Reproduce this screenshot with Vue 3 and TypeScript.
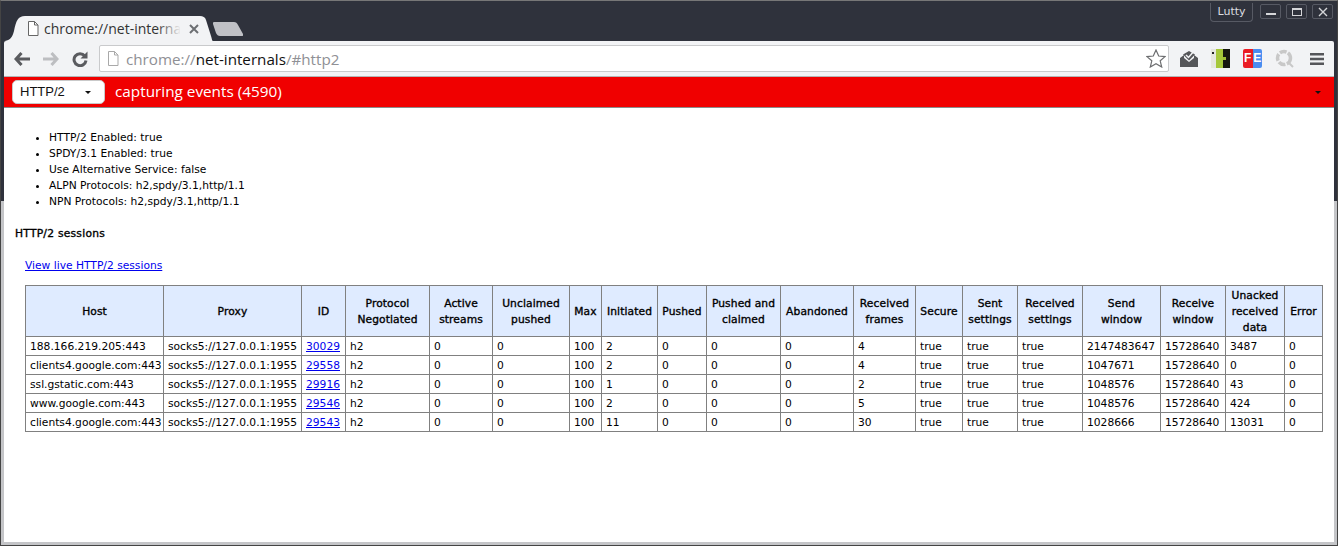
<script setup lang="ts">
interface Session {
  host: string
  id: string
  initiated: string
  frames: string
  sendWindow: string
  unacked: string
}

const headers: string[][] = [
  ['Host'], ['Proxy'], ['ID'], ['Protocol', 'Negotiated'], ['Active', 'streams'], ['Unclaimed', 'pushed'],
  ['Max'], ['Initiated'], ['Pushed'], ['Pushed and', 'claimed'], ['Abandoned'], ['Received', 'frames'],
  ['Secure'], ['Sent', 'settings'], ['Received', 'settings'], ['Send', 'window'], ['Receive', 'window'],
  ['Unacked', 'received', 'data'], ['Error'],
]
const colWidths = [138, 138, 44, 84, 63, 77, 32, 56, 49, 74, 73, 62, 47, 55, 65, 78, 65, 59, 38]

const sessions: Session[] = [
  { host: '188.166.219.205:443', id: '30029', initiated: '2', frames: '4', sendWindow: '2147483647', unacked: '3487' },
  { host: 'clients4.google.com:443', id: '29558', initiated: '2', frames: '4', sendWindow: '1047671', unacked: '0' },
  { host: 'ssl.gstatic.com:443', id: '29916', initiated: '1', frames: '2', sendWindow: '1048576', unacked: '43' },
  { host: 'www.google.com:443', id: '29546', initiated: '2', frames: '5', sendWindow: '1048576', unacked: '424' },
  { host: 'clients4.google.com:443', id: '29543', initiated: '11', frames: '30', sendWindow: '1028666', unacked: '13031' },
]
const info = [
  'HTTP/2 Enabled: true',
  'SPDY/3.1 Enabled: true',
  'Use Alternative Service: false',
  'ALPN Protocols: h2,spdy/3.1,http/1.1',
  'NPN Protocols: h2,spdy/3.1,http/1.1',
]
</script>

<template>
  <div class="window">
    <div class="titlebar">
      <div class="tabs">
        <div class="tab">
          <svg class="tab-shape" width="208" height="25" viewBox="0 0 208 25">
            <path d="M0 25c5-1 7-3 9-10C11 5 13 0 20 0h175c3 0 5 1 6 4l5 16c1 3 1 5 2 5z" fill="#f2f3f5" />
          </svg>
          <svg class="page-icon" width="12" height="15" viewBox="0 0 12 15">
            <path d="M1.500.5h6l3.500 3.500v10.500h-9.500z" fill="#fff" stroke="#666" />
            <path d="M7.500.5v3.500h3.500" fill="none" stroke="#666" />
          </svg>
          <span class="tab-title">chrome://net-interna</span>
          <span class="tab-fade"></span>
          <svg class="tab-close" width="10" height="10" viewBox="0 0 10 10">
            <path d="M1 1l8 8M9 1l-8 8" stroke="#6d6f73" stroke-width="2" />
          </svg>
        </div>
        <svg class="new-tab" width="30" height="14" viewBox="0 0 30 14">
          <path d="M1 0h20c2 0 3 1 4 3l5 9c.4 1 0 2-1 2H7c-2 0-3-1-4-3L0 2C-.3 1 0 0 1 0z" fill="#c0c1c6" />
        </svg>
      </div>
      <div class="profile">Lutty</div>
      <div class="win-buttons">
        <div class="win-btn"><svg width="12" height="12" viewBox="0 0 12 12"><rect x="1" y="7" width="10" height="2" fill="#d5d6d9" /></svg></div>
        <div class="win-btn"><svg width="12" height="12" viewBox="0 0 12 12"><rect x="1.500" y="2.500" width="9" height="7" fill="none" stroke="#d5d6d9" /><rect x="1" y="2" width="10" height="2" fill="#d5d6d9" /></svg></div>
        <div class="win-btn"><svg width="12" height="12" viewBox="0 0 12 12"><path d="M2 2l8 8M10 2l-8 8" stroke="#d5d6d9" stroke-width="1.400" /></svg></div>
      </div>
    </div>

    <div class="toolbar">
      <svg class="nav" width="16" height="14" viewBox="0 0 16 14"><path d="M7.500 1L2 7l5.500 6M3 7h13" fill="none" stroke="#5a5b5f" stroke-width="3" /></svg>
      <svg class="nav" width="16" height="14" viewBox="0 0 16 14"><path d="M8.500 1L14 7l-5.500 6M13 7H0" fill="none" stroke="#bdbec1" stroke-width="3" /></svg>
      <svg class="nav" width="16" height="16" viewBox="0 0 16 16"><path d="M12.800 5A6 6 0 1 0 14 9.500" fill="none" stroke="#5a5b5f" stroke-width="3" /><path d="M15.500 0.500v7H8.500z" fill="#5a5b5f" /></svg>
      <div class="omnibox">
        <svg class="page-icon" width="12" height="15" viewBox="0 0 12 15">
          <path d="M1.500.5h6l3.500 3.500v10.500h-9.500z" fill="#fff" stroke="#a9a9a9" />
          <path d="M7.500.5v3.500h3.500" fill="none" stroke="#a9a9a9" />
        </svg>
        <span class="url"><span class="dim">chrome://</span>net-internals<span class="dim">/#http2</span></span>
        <svg class="star" width="20" height="19" viewBox="0 0 20 19"><path d="M10 1l2.700 6 6.300.6-4.800 4.200 1.500 6.200L10 14.700 4.300 18l1.500-6.200L1 7.600 7.300 7z" fill="#fff" stroke="#6d6e70" stroke-width="1.200" /></svg>
      </div>
      <div class="extensions">
        <svg width="18" height="17" viewBox="0 0 18 17"><path d="M0 8l4-3v3l5 4 5-4V5l4 3v9H0z" fill="#555659" /><path d="M3 4.500L9 1l6 3.500-6 6z" fill="#555659" /><path d="M6 5l2.500 2.500L14 1" fill="none" stroke="#f2f3f5" stroke-width="1.500" /></svg>
        <svg width="19" height="19" viewBox="0 0 19 19"><rect width="5" height="19" fill="#e6e7df" /><rect x="5" width="8" height="19" fill="#a6c83a" /><rect x="12" width="7" height="19" fill="#16170f" /><rect x="1" y="3" width="2" height="2" fill="#222" /><rect x="12" y="8" width="3" height="3" fill="#9fbe36" /></svg>
        <div class="fe"><span>F</span><span>E</span></div>
        <svg width="19" height="19" viewBox="0 0 19 19"><circle cx="9" cy="9" r="6.500" fill="none" stroke="#c8c8c8" stroke-width="3.500" stroke-dasharray="7 1.500" /><path d="M13 13l5 5" stroke="#c8c8c8" stroke-width="2" /></svg>
      </div>
      <svg class="menu" width="14" height="12" viewBox="0 0 14 12"><path d="M0 1.250h14M0 6h14M0 10.750h14" stroke="#55565a" stroke-width="2.400" /></svg>
    </div>

    <div class="page">
      <div class="status-bar">
        <div class="view-select">HTTP/2<i class="caret"></i></div>
        <span class="capture">capturing events (4590)</span>
        <i class="caret bar-caret"></i>
      </div>
      <div class="content">
        <ul class="info">
          <li v-for="line in info" :key="line">{{ line }}</li>
        </ul>
        <h4>HTTP/2 sessions</h4>
        <a class="live" href="#">View live HTTP/2 sessions</a>
        <table class="sessions">
          <colgroup>
            <col v-for="(w, i) in colWidths" :key="i" :style="{ width: w + 'px' }" />
          </colgroup>
          <thead>
            <tr>
              <th v-for="h in headers" :key="h.join()">
                <div v-for="part in h" :key="part">{{ part }}</div>
              </th>
            </tr>
          </thead>
          <tbody>
            <tr v-for="s in sessions" :key="s.id">
              <td>{{ s.host }}</td>
              <td>socks5://127.0.0.1:1955</td>
              <td><a href="#">{{ s.id }}</a></td>
              <td>h2</td>
              <td>0</td>
              <td>0</td>
              <td>100</td>
              <td>{{ s.initiated }}</td>
              <td>0</td>
              <td>0</td>
              <td>0</td>
              <td>{{ s.frames }}</td>
              <td>true</td>
              <td>true</td>
              <td>true</td>
              <td>{{ s.sendWindow }}</td>
              <td>15728640</td>
              <td>{{ s.unacked }}</td>
              <td>0</td>
            </tr>
          </tbody>
        </table>
      </div>
    </div>
  </div>
</template>

<style>
html, body {
  margin: 0;
  background: #fff;
  overflow: hidden;
}
</style>

<style scoped>
.window {
  width: 1338px;
  height: 546px;
  box-sizing: border-box;
  padding: 2px 4px 3px 4px;
  background: linear-gradient(#2f323c 200px, #c4c5c8 200px);
  border-top: 1px solid #777;
  border-left: 1px solid #444;
  border-right: 1px solid #444;
  border-bottom: 1px solid #444;
  display: flex;
  flex-direction: column;
  font-family: "DejaVu Sans", sans-serif;
  position: relative;
}

.titlebar {
  height: 38px;
  display: flex;
  align-items: flex-start;
  flex: none;
  margin-left: -1px;
  margin-right: -1px;
}
.tabs {
  display: flex;
  align-items: flex-end;
  height: 38px;
  margin-left: 1px;
}
.tab {
  position: relative;
  width: 208px;
  height: 25px;
  display: flex;
  align-items: center;
  padding-left: 22px;
  box-sizing: border-box;
  color: #333;
  font-size: 14px;
}
.tab-shape {
  position: absolute;
  left: 0;
  top: 0;
}
.tab .page-icon,
.tab-title,
.tab-close {
  position: relative;
}
.tab-title {
  margin-left: 5px;
  width: 136px;
  overflow: hidden;
  white-space: nowrap;
  font-family: "Open Sans", sans-serif;
}
.tab-fade {
  position: absolute;
  left: 152px;
  top: 2px;
  width: 24px;
  height: 20px;
  background: linear-gradient(to right, rgba(242, 243, 245, 0), #f2f3f5);
}
.tab-close {
  margin-left: 9px;
}
.new-tab {
  margin-left: 0;
  margin-bottom: 5px;
}

.profile {
  margin-left: auto;
  margin-right: 7px;
  width: 43px;
  height: 19px;
  box-sizing: border-box;
  border: 1px solid #575a64;
  border-top: none;
  border-radius: 0 0 4px 4px;
  color: #dcdde0;
  font-size: 11px;
  line-height: 18px;
  text-align: center;
}
.win-buttons {
  display: flex;
  gap: 5px;
  margin-right: 1px;
  margin-top: 1px;
}
.win-btn {
  width: 21px;
  height: 15px;
  box-sizing: border-box;
  border: 1px solid #575a64;
  border-radius: 2px;
  display: flex;
  align-items: center;
  justify-content: center;
}

.toolbar {
  height: 35px;
  flex: none;
  background: #f2f3f5;
  border-radius: 2px 2px 0 0;
  display: flex;
  align-items: center;
  padding: 0 10px 0 10px;
  box-sizing: border-box;
  margin-left: -1px;
  margin-right: -1px;
}
.nav {
  margin-right: 13px;
  flex: none;
}
.omnibox {
  width: 1070px;
  height: 27px;
  flex: none;
  margin-left: -2px;
  box-sizing: border-box;
  background: #fff;
  border: 1px solid #c9cacc;
  border-radius: 2px;
  display: flex;
  align-items: center;
  padding: 0 2px 0 7px;
}
.url {
  margin-left: 7px;
  font-size: 15.200px;
  color: #111;
  font-family: "Open Sans", sans-serif;
}
.dim {
  color: #8f9095;
}
.star {
  margin-left: auto;
}
.extensions {
  display: flex;
  align-items: center;
  gap: 13px;
  margin-left: 11px;
}
.fe {
  width: 19px;
  height: 19px;
  display: flex;
  border-radius: 2px;
  overflow: hidden;
  color: #fff;
  font: bold 12px/19px "Liberation Sans", sans-serif;
}
.fe span {
  flex: 1;
  text-align: center;
  background: #ea1c24;
}
.fe span + span {
  background: #4a8df0;
}
.menu {
  margin-left: auto;
}

.page {
  flex: 1;
  background: #fff;
  display: flex;
  flex-direction: column;
  min-height: 0;
  border-top: 1px solid #b5b5b5;
  margin-left: -1px;
  margin-right: -1px;
}
.status-bar {
  height: 30px;
  flex: none;
  background: #f00000;
  border-bottom: 1px solid #8b8b8b;
  display: flex;
  align-items: center;
  padding: 0 13px 0 8px;
  color: #fff;
}
.view-select {
  width: 93px;
  height: 24px;
  box-sizing: border-box;
  background: #fff;
  border: 1px solid #c9c9c9;
  border-radius: 5px;
  color: #111;
  font: 13px/22px "Liberation Sans", sans-serif;
  padding-left: 7px;
  display: flex;
  align-items: center;
}
.caret {
  width: 0;
  height: 0;
  border: 3px solid transparent;
  border-top-color: #111;
  border-bottom: none;
  margin-left: 20px;
}
.capture {
  margin-left: 10px;
  margin-top: -2px;
  font-size: 15.300px;
  font-family: "Open Sans", sans-serif;
}
.bar-caret {
  margin-left: auto;
}

.content {
  font-size: 10.700px;
  color: #000;
  padding-left: 21px;
}
.info {
  margin: 22px 0 0;
  padding: 0 0 0 24px;
  line-height: 16px;
}
h4 {
  margin: 16px 0 0 -10px;
  font-size: 10.700px;
  line-height: 16px;
  font-weight: 400;
  letter-spacing: 0.25px;
  -webkit-text-stroke: 0.35px #000;
}
.live {
  display: block;
  margin-top: 16px;
  line-height: 16px;
  color: #00e;
}
.sessions {
  margin-top: 11px;
  table-layout: fixed;
  border-collapse: collapse;
  width: 1298px;
  white-space: nowrap;
}
.sessions th,
.sessions td {
  border: 1px solid #808080;
  padding: 2px 4px 0;
  line-height: 16px;
}
.sessions th {
  background: #dfebff;
  font-weight: 400;
  letter-spacing: 0.1px;
  -webkit-text-stroke: 0.35px #000;
  text-align: center;
}
.sessions td a {
  color: #00e;
}
</style>
